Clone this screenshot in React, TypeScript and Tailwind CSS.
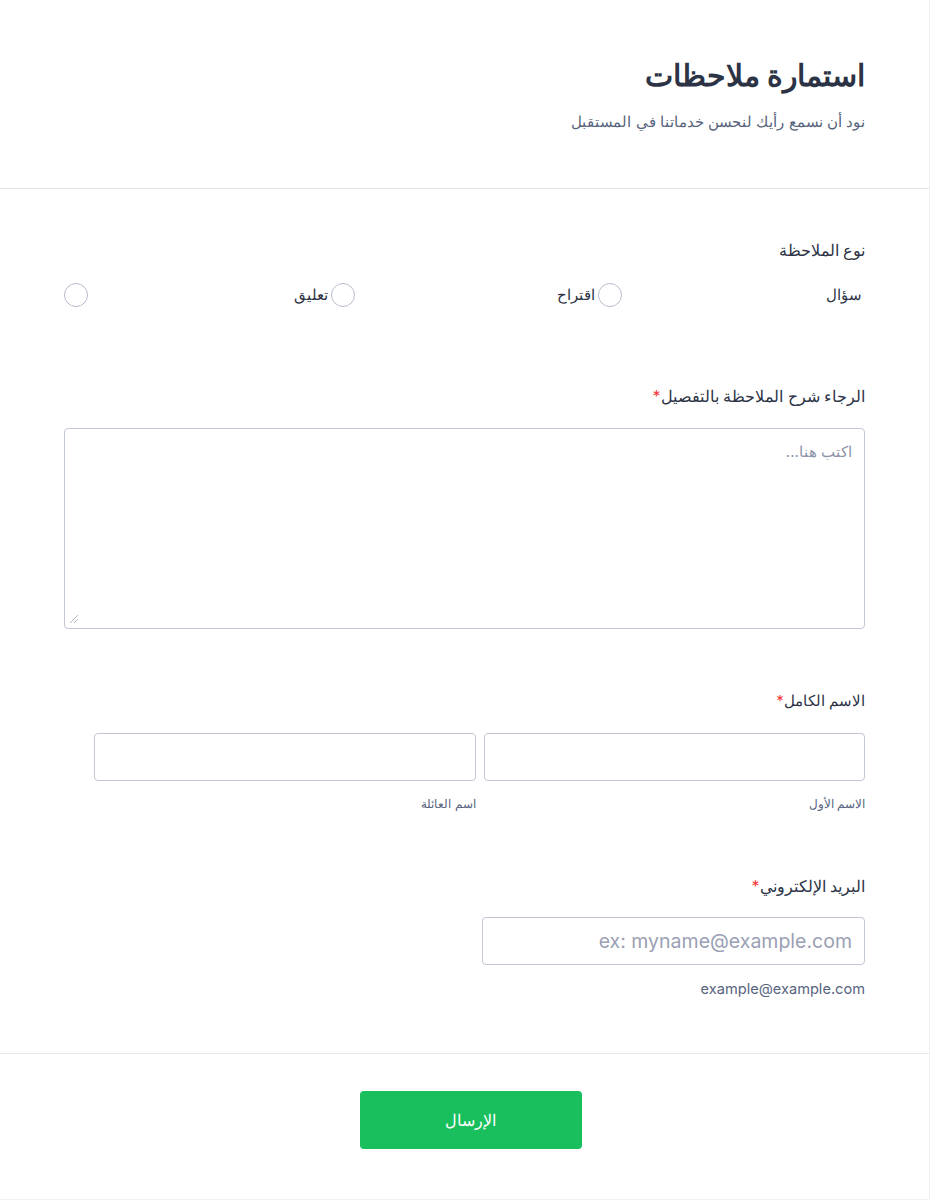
import React from "react";

const Star = () => <span className="text-[#f23a3c]">*</span>;

function Radio({ label }: { label: string }) {
  return (
    <label className="flex items-center justify-between h-6">
      <span className="pr-[3px] text-[15px] text-[#2c3345]">{label}</span>
      <span className="w-6 h-6 rounded-full border border-[#b8bdcc] bg-white" />
    </label>
  );
}

export default function App() {
  return (
    <div
      dir="rtl"
      className="w-[930px] min-h-[1200px] bg-white border-r border-b border-[#f1f2f5] text-[#2c3345] font-[Inter,sans-serif]"
    >
      <header className="px-16 pt-14 pb-[54px] border-b border-[#dfe2e8]">
        <h1 className="text-[30px] leading-[38px] font-bold text-[#2c3345]">استمارة ملاحظات</h1>
        <p className="mt-4 text-[15px] leading-6 text-[#57647e]">نود أن نسمع رأيك لنحسن خدماتنا في المستقبل</p>
      </header>

      <main className="px-16 pt-[49px] pb-[54px] border-b border-[#e6e8ee]">
        <div className="text-base leading-6">نوع الملاحظة</div>
        <div className="mt-[21px] grid grid-cols-3">
          <Radio label="سؤال" />
          <Radio label="اقتراح" />
          <Radio label="تعليق" />
        </div>

        <div className="mt-[77px] text-base leading-6">
          الرجاء شرح الملاحظة بالتفصيل<Star />
        </div>
        <div className="relative mt-5">
          <textarea
            dir="rtl"
            placeholder="اكتب هنا..."
            className="block w-full h-[201px] resize-none rounded border border-[#c3c8d6] px-3 py-[13px] text-[15px] leading-5 placeholder:text-[#8d94a8] outline-none"
          />
          <svg className="absolute left-[5px] bottom-[5px] w-[10px] h-[10px]" viewBox="0 0 10 10">
            <path d="M1 9 L9 1 M5 9 L9 5" stroke="#b5b9c6" strokeWidth="1" />
          </svg>
        </div>

        <div className="mt-[60px] text-[15px] leading-6">
          الاسم الكامل<Star />
        </div>
        <div className="mt-5 w-[771px] grid grid-cols-2 gap-2">
          <div>
            <input className="block w-full h-12 rounded border border-[#c3c8d6] px-3 outline-none" />
            <div className="mt-[15px] text-xs leading-4 text-[#57647e]">الاسم الأول</div>
          </div>
          <div>
            <input className="block w-full h-12 rounded border border-[#c3c8d6] px-3 outline-none" />
            <div className="mt-[15px] text-xs leading-4 text-[#57647e]">اسم العائلة</div>
          </div>
        </div>

        <div className="mt-[62px] text-base leading-6">
          البريد الإلكتروني<Star />
        </div>
        <input
          dir="ltr"
          placeholder="ex: myname@example.com"
          className="mt-[19px] block w-[383px] h-12 rounded border border-[#c3c8d6] px-3 text-right text-[19.5px] placeholder:text-[#9aa0b4] outline-none"
        />
        <div className="mt-[14px] text-[14.6px] leading-5 text-[#57647e]">example@example.com</div>
      </main>

      <footer className="pt-[37px] flex justify-center pl-3">
        <button className="w-[222px] h-[58px] rounded bg-[#19be5d] text-white text-base font-normal">الإرسال</button>
      </footer>
    </div>
  );
}
